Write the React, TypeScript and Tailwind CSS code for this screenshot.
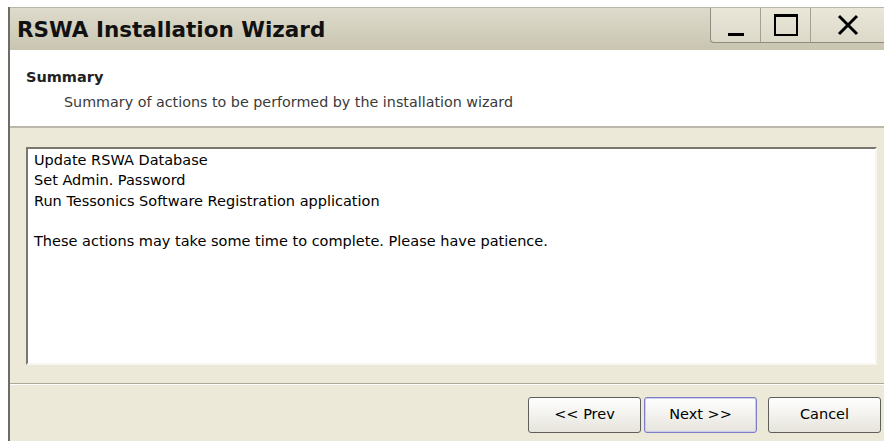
import React from "react";

const uiFont = { fontFamily: '"DejaVu Sans", "Liberation Sans", sans-serif' };

interface WizardButtonProps {
  label: string;
  focused?: boolean;
  className?: string;
}

const WizardButton: React.FC<WizardButtonProps> = ({ label, focused, className }) => (
  <button
    className={`h-[36px] w-[113px] rounded-[3px] border text-[14.5px] text-black bg-gradient-to-b from-white to-[#e6e4dc] ${
      focused ? "border-[#7d7dc9] shadow-[inset_0_0_0_1px_#c9cdf0]" : "border-[#5f5f5a]"
    } ${className ?? ""}`}
  >
    {label}
  </button>
);

// Title bar window controls
const WindowControls: React.FC = () => (
  <div className="w-full flex self-start h-[35px] rounded-bl-[4px] border-l border-b border-[#8f8c80] bg-gradient-to-b from-[#eae7da] to-[#dcd9c9]">
    <div className="w-[50px] flex items-end justify-center pb-[6px] border-r border-[#a3a091]">
      <div className="w-[16px] h-[3px] bg-black" />
    </div>
    <div className="w-[50px] flex items-center justify-center border-r border-[#a3a091]">
      <div className="w-[24px] h-[22px] border-2 border-t-[3px] border-black" />
    </div>
    <div className="flex-1 flex items-center justify-center">
      <svg width="22" height="22" viewBox="0 0 22 22">
        <path d="M2 2 L20 20 M20 2 L2 20" stroke="black" strokeWidth="3" />
      </svg>
    </div>
  </div>
);

export default function App() {
  return (
    <div className="w-[884px] h-[441px] bg-white pt-[7px] pl-[8px] overflow-hidden" style={uiFont}>
      <div className="h-full flex flex-col border-l-2 border-[#6e6c64]">
        {/* Title bar */}
        <div className="h-[43px] flex items-start bg-gradient-to-b from-[#dedbcc] to-[#c9c5b1] border-t border-[#b9b6a6]">
          <div className="flex-1 pl-[7px] pt-[7px] text-[21.5px] leading-[30px] font-bold text-[#111]">RSWA Installation Wizard</div>
          <div className="w-[174px] flex">
            <WindowControls />
          </div>
        </div>

        {/* Header */}
        <div className="h-[78px] bg-white border-b-2 border-[#bcb9ab] pl-[16px] pt-[18px]">
          <div className="text-[14.5px] font-bold text-[#222] leading-[18px]">Summary</div>
          <div className="text-[14.3px] text-[#3a3a3a] leading-[18px] pl-[38px] pt-[7px]">
            Summary of actions to be performed by the installation wizard
          </div>
        </div>

        {/* Body */}
        <div className="flex-1 flex flex-col bg-[#ece9d8]">
          <div className="pl-[16px] pr-[7px] pt-[19px] pb-[18px]">
            <div className="h-[218px] bg-white border-2 border-t-[#7a786e] border-l-[#7a786e] border-b-[#f7f6f0] border-r-[#f7f6f0] px-[6px] pt-[1px] text-[14.5px] text-black leading-[20.3px]">
              <div>Update RSWA Database</div>
              <div>Set Admin. Password</div>
              <div>Run Tessonics Software Registration application</div>
              <div>&nbsp;</div>
              <div>These actions may take some time to complete. Please have patience.</div>
            </div>
          </div>
          <div className="h-[2px] border-t border-[#aca899] border-b border-b-white" />
          <div className="flex justify-end pr-[3px] pt-[12px]">
            <WizardButton label="<< Prev" />
            <WizardButton label="Next >>" focused className="ml-[3px]" />
            <WizardButton label="Cancel" className="ml-[11px]" />
          </div>
        </div>
      </div>
    </div>
  );
}
